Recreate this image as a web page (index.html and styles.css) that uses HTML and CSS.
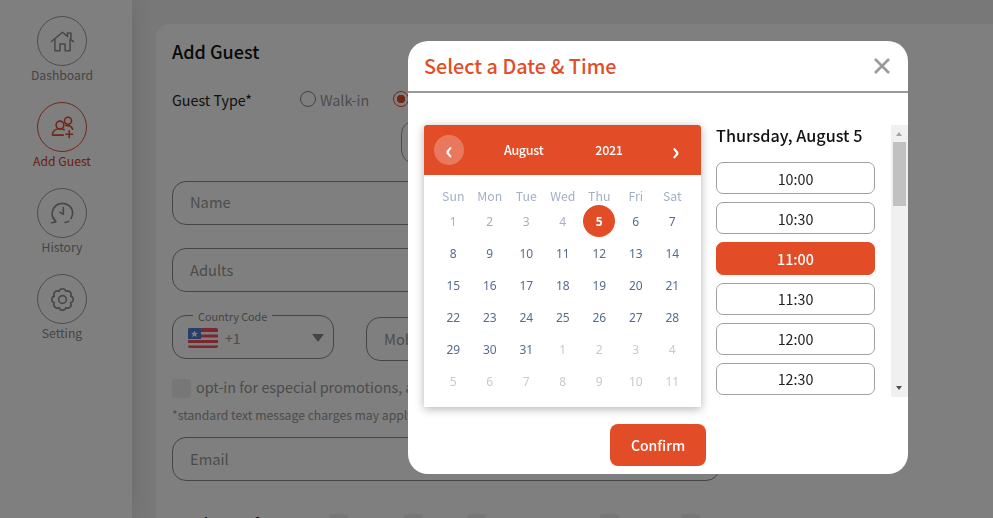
FILE: index.html
```html
<!DOCTYPE html>
<html lang="en">
<head>
    <meta charset="UTF-8">
    <meta name="viewport" content="width=device-width, initial-scale=1.0">
    <title>Add Guest</title>
    <link rel="stylesheet" href="styles.css">
</head>
<body>
    <div class="page">
        <nav class="sidebar">
            <a class="nav-item">
                <span class="nav-icon">
                    <svg width="27" height="27" viewBox="0 0 32 32" fill="none" stroke="currentColor" stroke-width="1.8" stroke-linejoin="round" stroke-linecap="round"><path d="M3 16 16 5l6 5V6h4v8l3 2"/><path d="M7 14v13h6v-8h6v8h6V13"/></svg>
                </span>
                <span class="nav-label">Dashboard</span>
            </a>
            <a class="nav-item active">
                <span class="nav-icon">
                    <svg width="27" height="27" viewBox="0 0 32 32" fill="none" stroke="currentColor" stroke-width="1.9" stroke-linecap="round"><circle cx="13" cy="13" r="4.6"/><circle cx="22.5" cy="8" r="4.2"/><path d="M4 25c0-5 4-7.600 9-7.600 2 0 3.500.4 5 1.200M4 25h13"/><path d="M20 13.500c4 0 7 1.500 8 4.500M24 20v8M20 24h8"/></svg>
                </span>
                <span class="nav-label">Add Guest</span>
            </a>
            <a class="nav-item">
                <span class="nav-icon">
                    <svg width="27" height="27" viewBox="0 0 32 32" fill="none" stroke="currentColor" stroke-width="1.9" stroke-linecap="round" stroke-linejoin="round"><path d="M8 25C4 22 3 18 4 14 5.500 8 10 4 16 4c6.500 0 12 5 12 11.500 0 2.500-.7 4.500-2 6.500"/><path d="M17 9v8l-4-2.500"/><path d="M5 20.500 8 26l-5 1"/><path d="M19 26.500c1.500 0 3-.4 4.500-1.200"/></svg>
                </span>
                <span class="nav-label">History</span>
            </a>
            <a class="nav-item">
                <span class="nav-icon">
                    <svg width="27" height="27" viewBox="0 0 32 32" fill="none" stroke="currentColor" stroke-width="1.9" stroke-linejoin="round"><circle cx="16" cy="16" r="4.6"/><path d="M25.700 11.980A4.200 4.200 0 0 1 25.700 20.020 4.200 4.200 0 0 1 20.020 25.700 4.200 4.200 0 0 1 11.980 25.700 4.200 4.200 0 0 1 6.300 20.020 4.200 4.200 0 0 1 6.300 11.980 4.200 4.200 0 0 1 11.980 6.300 4.200 4.200 0 0 1 20.020 6.300 4.200 4.200 0 0 1 25.700 11.980z"/></svg>
                </span>
                <span class="nav-label">Setting</span>
            </a>
        </nav>

        <main class="content">
            <section class="card">
                <h1>Add Guest</h1>
                <div class="guest-type">
                    <span class="guest-type-label">Guest Type*</span>
                    <label class="radio"><span class="radio-dot"></span>Walk-in</label>
                    <label class="radio checked"><span class="radio-dot"></span>Reservation</label>
                </div>
                <div class="date-row"><div class="date-box"></div></div>
                <div class="field">Name</div>
                <div class="field">Adults</div>
                <div class="phone-row">
                    <div class="country">
                        <span class="country-legend">Country Code</span>
                        <svg class="flag" width="30" height="20" viewBox="0 0 30 20">
                            <rect width="30" height="20" rx="2" fill="#f4505f"/>
                            <rect y="4" width="30" height="2.500" fill="white"/>
                            <rect y="9.500" width="30" height="2.500" fill="white"/>
                            <rect y="15" width="30" height="2.500" fill="white"/>
                            <path d="M2 0h11v11H0V2a2 2 0 0 1 2-2z" fill="#4a7fd0"/>
                            <path d="m6.500 2.500 1 2.300 2.400.2-1.800 1.600.6 2.400-2.200-1.300-2.200 1.300.6-2.400L3.100 5l2.400-.2z" fill="white"/>
                        </svg>
                        <span class="country-code">+1</span>
                        <span class="country-arrow"></span>
                    </div>
                    <div class="field mobile">Mobile</div>
                </div>
                <label class="opt-in"><span class="checkbox"></span><span class="opt-text">opt-in for especial promotions, and updates via text message</span></label>
                <p class="note">*standard text message charges may apply</p>
                <div class="field email">Email</div>
                <div class="prefs">
                    <strong>Seating Preference</strong>
                    <label class="pref"><span class="checkbox"></span>Booth</label>
                    <label class="pref"><span class="checkbox"></span>Bar</label>
                    <label class="pref"><span class="checkbox"></span>First Available</label>
                    <label class="pref"><span class="checkbox"></span>Counter</label>
                    <label class="pref"><span class="checkbox"></span>Table</label>
                </div>
            </section>
        </main>
    </div>

    <div class="overlay">
        <div class="modal">
            <div class="modal-header">
                <h2>Select a Date &amp; Time</h2>
                <svg class="modal-close" width="18" height="18" viewBox="0 0 18 18" stroke="#999" stroke-width="2.600"><path d="M2 2l14 14M16 2 2 16"/></svg>
            </div>
            <div class="modal-body">
                <div class="calendar">
                    <div class="calendar-head">
                        <span class="cal-prev">‹</span>
                        <span class="cal-month">August</span>
                        <span class="cal-year">2021</span>
                        <span class="cal-next">›</span>
                    </div>
                    <div class="calendar-grid">
                        <span class="dow">Sun</span><span class="dow">Mon</span><span class="dow">Tue</span><span class="dow">Wed</span><span class="dow">Thu</span><span class="dow">Fri</span><span class="dow">Sat</span>
                        <span class="day past">1</span><span class="day past">2</span><span class="day past">3</span><span class="day past">4</span><span class="day selected">5</span><span class="day">6</span><span class="day">7</span>
                        <span class="day">8</span><span class="day">9</span><span class="day">10</span><span class="day">11</span><span class="day">12</span><span class="day">13</span><span class="day">14</span>
                        <span class="day">15</span><span class="day">16</span><span class="day">17</span><span class="day">18</span><span class="day">19</span><span class="day">20</span><span class="day">21</span>
                        <span class="day">22</span><span class="day">23</span><span class="day">24</span><span class="day">25</span><span class="day">26</span><span class="day">27</span><span class="day">28</span>
                        <span class="day">29</span><span class="day">30</span><span class="day">31</span><span class="day other">1</span><span class="day other">2</span><span class="day other">3</span><span class="day other">4</span>
                        <span class="day other">5</span><span class="day other">6</span><span class="day other">7</span><span class="day other">8</span><span class="day other">9</span><span class="day other">10</span><span class="day other">11</span>
                    </div>
                </div>
                <div class="times">
                    <div class="times-list">
                        <h3>Thursday, August 5</h3>
                        <button class="time">10:00</button>
                        <button class="time">10:30</button>
                        <button class="time selected">11:00</button>
                        <button class="time">11:30</button>
                        <button class="time">12:00</button>
                        <button class="time">12:30</button>
                    </div>
                    <div class="scrollbar">
                        <span class="scroll-up"></span>
                        <span class="scroll-thumb"></span>
                        <span class="scroll-down"></span>
                    </div>
                </div>
            </div>
            <div class="modal-footer">
                <button class="confirm">Confirm</button>
            </div>
        </div>
    </div>
</body>
</html>
```
FILE: styles.css
```css
* {
    box-sizing: border-box;
}
html, body {
    height: 100%;
    overflow: hidden;
}
body {
    margin: 0;
    font-family: "Noto Sans CJK SC", "Noto Sans", sans-serif;
    background-color: #f1f1f1;
    color: #222;
}
.page {
    display: flex;
    height: 518px;
    overflow: hidden;
}

/* sidebar */
.sidebar {
    width: 132px;
    flex: none;
    background: white;
    padding-top: 16px;
    display: flex;
    flex-direction: column;
    align-items: center;
    box-shadow: 0 0 24px rgba(0,0,0,0.12);
    z-index: 1;
}
.nav-item {
    display: flex;
    flex-direction: column;
    align-items: center;
    height: 86px;
    padding-right: 8px;
    color: #8a8a8a;
    font-size: 12.200px;
    line-height: 18px;
}
.nav-icon {
    width: 50px;
    height: 50px;
    border: 1px solid #999;
    border-radius: 50%;
    display: flex;
    align-items: center;
    justify-content: center;
    color: #8c8f94;
}
.nav-item.active {
    color: #d63c22;
}
.nav-item.active .nav-icon {
    border-color: #e34e28;
    color: #e34e28;
}

/* form behind the modal */
.content {
    flex: 1;
    min-width: 0;
    padding: 24px 0 0 24px;
}
.card {
    background: white;
    border-radius: 14px 0 0 0;
    height: 600px;
    padding: 14px 16px 16px;
}
h1 {
    margin: 0;
    font-size: 18px;
    font-weight: 500;
    line-height: 26px;
    color: #111;
}
.guest-type {
    display: flex;
    align-items: center;
    margin-top: 23px;
    height: 24px;
    font-size: 14.300px;
}
.guest-type-label {
    width: 128px;
    color: #222;
}
.radio {
    display: flex;
    align-items: center;
    gap: 4px;
    margin-right: 24px;
    color: #999;
}
.radio-dot {
    width: 16px;
    height: 16px;
    border: 1px solid #888;
    border-radius: 50%;
}
.radio.checked .radio-dot {
    border-color: #e34e28;
    background: radial-gradient(circle, #e34e28 0 4px, white 4.500px);
}
.date-row {
    height: 44px;
    margin-top: 9px;
    padding-left: 229px;
}
.date-box {
    width: 300px;
    height: 44px;
    border: 1px solid #999;
    border-radius: 14px;
}
.field {
    width: 548px;
    height: 44px;
    margin-top: 23px;
    padding-left: 17px;
    border: 1px solid #8a8a8a;
    border-radius: 14px;
    font-size: 14.700px;
    line-height: 41px;
    color: #999;
}
.date-row + .field {
    margin-top: 17px;
    line-height: 40px;
}
.phone-row {
    display: flex;
    align-items: flex-start;
    gap: 32px;
    margin-top: 23px;
}
.country {
    position: relative;
    flex: none;
    width: 162px;
    height: 44px;
    display: flex;
    align-items: center;
    padding: 1px 9px 0 15px;
    border: 1px solid #8a8a8a;
    border-radius: 14px;
}
.country-legend {
    position: absolute;
    top: -7px;
    left: 20px;
    padding: 0 5px;
    background: white;
    font-size: 10.800px;
    line-height: 14px;
    color: #8a8a8a;
}
.flag {
    flex: none;
}
.country-code {
    margin-left: 7px;
    font-size: 14px;
    color: #999;
}
.country-arrow {
    margin-left: auto;
    border-left: 6px solid transparent;
    border-right: 6px solid transparent;
    border-top: 8px solid #888;
}
.field.mobile {
    width: 354px;
    margin-top: 2px;
}
.opt-in {
    display: flex;
    align-items: center;
    gap: 5px;
    margin-top: 18px;
    height: 19px;
    font-size: 14.400px;
    color: #999;
    white-space: nowrap;
}
.opt-text {
    padding-bottom: 5px;
}
.checkbox {
    width: 19px;
    height: 19px;
    flex: none;
    background: #efefef;
    border-radius: 3px;
}
.note {
    margin: 8px 0 0;
    font-size: 12.200px;
    line-height: 18px;
    color: #999;
    white-space: nowrap;
}
.field.email {
    margin-top: 13px;
}
.prefs {
    display: grid;
    grid-template-columns: 157px 75px 63px 133px 81px auto;
    align-items: center;
    margin-top: 32px;
    height: 20px;
    font-size: 13px;
    color: #999;
}
.prefs strong {
    font-size: 15px;
    font-weight: 500;
    color: #222;
    white-space: nowrap;
}
.pref {
    display: flex;
    align-items: center;
    gap: 7px;
    white-space: nowrap;
}

/* modal */
.overlay {
    position: fixed;
    top: 0;
    left: 0;
    width: 100%;
    height: 100%;
    z-index: 5;
    background: rgba(0,0,0,0.5);
}
.modal {
    width: 500px;
    height: 433px;
    margin: 41px 0 0 408px;
    background: white;
    border-radius: 20px;
}
.modal-header {
    display: flex;
    align-items: center;
    justify-content: space-between;
    height: 52px;
    padding: 0 17px 0 16px;
    border-bottom: 2px solid #999;
}
h2 {
    margin: 0;
    font-size: 19.800px;
    font-weight: 500;
    line-height: 50px;
    color: #e24d28;
}
.modal-body {
    display: flex;
    align-items: flex-start;
    padding: 32px 0 0 16px;
}
.calendar {
    width: 277px;
    height: 282px;
    flex: none;
    border-radius: 3px 3px 0 0;
    box-shadow: 0 2px 10px rgba(0,0,0,0.3);
}
.calendar-head {
    display: flex;
    align-items: center;
    height: 50px;
    padding: 0 10px;
    background: #e24d28;
    border-radius: 3px 3px 0 0;
    color: white;
    font-size: 12.500px;
    font-weight: 500;
    line-height: 18px;
    letter-spacing: -0.3px;
}
.cal-prev {
    width: 30px;
    height: 30px;
    border-radius: 50%;
    background: rgba(255,255,255,0.25);
    text-align: center;
    font-size: 24px;
    line-height: 28px;
    font-weight: 700;
}
.cal-month {
    margin: 0 0 0 40px;
}
.cal-year {
    margin: 0 0 0 52px;
}
.cal-next {
    margin-left: 49px;
    font-size: 24px;
    line-height: 28px;
    font-weight: 700;
}
.calendar-grid {
    display: grid;
    grid-template-columns: repeat(7, 36.500px);
    grid-template-rows: 18px repeat(6, 32px);
    padding: 12px 0 0 11px;
    justify-content: start;
    font-family: "Noto Sans", sans-serif;
    font-size: 12px;
}
.dow, .day {
    display: flex;
    align-items: center;
    justify-content: center;
    color: #566c8c;
}
.dow {
    font-family: "Noto Sans CJK SC", sans-serif;
    font-size: 12.300px;
    color: #a3b0c4;
}
.day {
    width: 32px;
    height: 32px;
    margin-left: 2.250px;
}
.day.past {
    color: #a3b0c4;
}
.day.other {
    color: #c9c9c9;
}
.day.selected {
    border-radius: 50%;
    background: #e24d28;
    color: white;
    font-weight: 700;
}
.times {
    display: flex;
    flex: 1;
    align-items: flex-start;
    margin-left: 15px;
    height: 272px;
}
.times-list {
    width: 159px;
    flex: none;
}
h3 {
    margin: 0 0 17px;
    font-size: 16.200px;
    font-weight: 500;
    line-height: 20px;
    color: #111;
}
.time {
    display: block;
    width: 100%;
    height: 32px;
    margin-bottom: 8.200px;
    padding: 0;
    background: white;
    border: 1px solid #a0a0a0;
    border-radius: 7px;
    font-family: "Noto Sans CJK SC", sans-serif;
    font-size: 14.300px;
    color: #222;
}
.time.selected {
    height: 33px;
    margin-bottom: 7.200px;
    background: #e24d28;
    border-color: #e24d28;
    color: white;
    font-weight: 500;
}
.scrollbar {
    position: relative;
    width: 17px;
    height: 272px;
    margin-left: auto;
    background: #f0f0f0;
}
.scroll-up, .scroll-down {
    position: absolute;
    left: 5px;
    border-left: 3.500px solid transparent;
    border-right: 3.500px solid transparent;
}
.scroll-up {
    top: 7px;
    border-bottom: 4px solid #a3a3a3;
}
.scroll-down {
    bottom: 7px;
    border-top: 4px solid #505050;
}
.scroll-thumb {
    position: absolute;
    top: 17px;
    left: 2px;
    width: 13px;
    height: 64px;
    background: #c1c1c1;
}
.modal-footer {
    display: flex;
    justify-content: flex-end;
    padding: 17px 202px 0 0;
}
.confirm {
    width: 96px;
    height: 42px;
    background: #e24d28;
    border: none;
    border-radius: 8px;
    color: white;
    font-family: "Noto Sans CJK SC", sans-serif;
    font-size: 14px;
    font-weight: 500;
}
```
